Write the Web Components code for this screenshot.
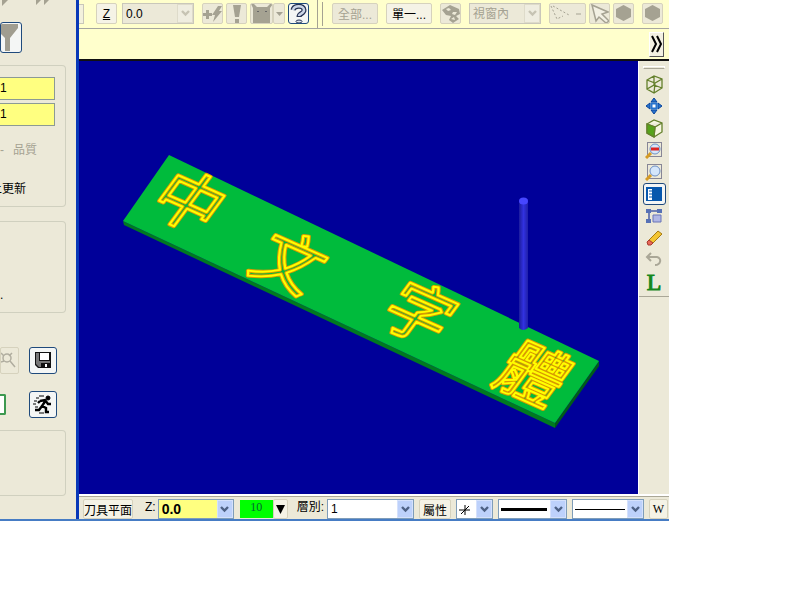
<!DOCTYPE html>
<html lang="zh-Hant">
<head>
<meta charset="utf-8">
<title>刀具平面</title>
<style>
  body { margin: 0; background: #fff; }
</style>
</head>
<body>
<cam-window></cam-window>

<script>
const arrow = '<svg width="9" height="7" viewBox="0 0 9 7"><path d="M1 1l3.5 3.5L8 1" fill="none" stroke="currentColor" stroke-width="2.4"/></svg>';

const base = `
  *, *::before { box-sizing: border-box; }
  button, input { font: inherit; margin: 0; padding: 0; border-radius: 0; }
  svg { display: block; flex: none; }
`;

class ToolButton extends HTMLElement {
  constructor() {
    super();
    this.attachShadow({ mode: 'open' });
  }

  connectedCallback() {
    const disabled = this.hasAttribute('disabled') ? 'disabled' : '';
    const label = this.getAttribute('label');
    this.shadowRoot.innerHTML = `
      <style>
        ${base}
        :host { display: block; flex: none; width: var(--w, 21px); height: var(--h, 21px); }
        button {
          display: flex;
          align-items: center;
          justify-content: center;
          width: 100%;
          height: 100%;
          overflow: hidden;
          white-space: nowrap;
          color: #000;
          background: #f5f3e6;
          border: 1px solid #d6d2bd;
          border-radius: 2px;
        }
        button:disabled { color: #a5a292; background: #ece9d8; }
        :host([flat]) button { background: none; border: 0; }
        :host([strong]) button { background: #f4f6f5; border: 1px solid #1f4a7c; border-radius: 3px; }
        :host([raised]) button { background: #f3f1e2; border-color: #fff #555 #555 #fff; border-radius: 0; }
      </style>
      <button ${disabled} ${label ? `aria-label="${label}"` : ''}><slot></slot></button>
    `;
  }
}
customElements.define('tool-button', ToolButton);

class ComboBox extends HTMLElement {
  constructor() {
    super();
    this.attachShadow({ mode: 'open' });
  }

  connectedCallback() {
    const disabled = this.hasAttribute('disabled') ? 'disabled' : '';
    const value = this.getAttribute('value') || '';
    this.shadowRoot.innerHTML = `
      <style>
        ${base}
        :host {
          position: relative;
          display: flex;
          flex: none;
          box-sizing: border-box;
          width: var(--w, 72px);
          height: var(--h, 21px);
          background: var(--field, #fff);
          border: 1px solid #7f9db9;
        }
        :host([disabled]) { --field: #ece9d8; border-color: #c9c7ba; color: #a5a292; }
        select {
          appearance: none;
          width: 100%;
          min-width: 0;
          margin: 0;
          padding: 0 16px 0 3px;
          border: 0;
          background: none;
          color: inherit;
          font: inherit;
          opacity: 1;
        }
        .arrow {
          position: absolute;
          top: 0;
          right: 0;
          bottom: 0;
          width: 16px;
          display: flex;
          align-items: center;
          justify-content: center;
          color: #4d6185;
          background: #bdd1fb;
          border: 1px solid #d5e1fc;
          pointer-events: none;
        }
        :host([disabled]) .arrow { color: #c6c3b3; background: #efede0; border-color: #dedbca; }
        .sample {
          position: absolute;
          left: 2px;
          right: 19px;
          top: 0;
          bottom: 0;
          display: flex;
          align-items: center;
          pointer-events: none;
        }
      </style>
      <select ${disabled} aria-label="${this.getAttribute('label')}"><option>${value}</option></select>
      <span class="sample"><slot></slot></span>
      <span class="arrow">${arrow}</span>
    `;
  }
}
customElements.define('combo-box', ComboBox);

class OptionPanel extends HTMLElement {
  constructor() {
    super();
    this.attachShadow({ mode: 'open' });
    this.shadowRoot.innerHTML = `
      <style>
        ${base}
        :host {
          display: flex;
          flex-direction: column;
          flex: none;
          box-sizing: border-box;
          width: 79px;
          overflow: hidden;
          background: #ece9d8;
          border-right: 3px solid #0838b8;
        }
        .steps { height: 22px; display: flex; gap: 27px; padding-left: 1px; }
        .group {
          flex: none;
          width: 66px;
          border: 1px solid #d0d0bf;
          border-left: 0;
          border-radius: 0 4px 4px 0;
        }
        .values { height: 142px; margin-top: 12px; padding-top: 11px; }
        input {
          display: block;
          width: 55px;
          height: 23px;
          margin-bottom: 3px;
          padding-bottom: 2px;
          border: 1px solid #8c9a94;
          border-left: 0;
          background: #ffff80;
        }
        .quality { display: flex; gap: 9px; height: 19px; margin-top: 15px; line-height: 19px; color: #a5a292; }
        .update { display: flex; height: 19px; margin-top: 20px; line-height: 19px; white-space: nowrap; }
        .update span { margin-left: -10px; }
        .second { height: 92px; margin-top: 14px; padding-top: 66px; line-height: 14px; }
        .row { display: flex; align-items: center; height: 28px; gap: 10px; }
        .row.save { margin-top: 33px; }
        .row.run { margin-top: 16px; gap: 23px; }
        .third { height: 66px; margin-top: 12px; }
        .green { width: 6px; height: 21px; background: #fff; border: 2px solid #3d9950; border-left: 0; border-radius: 0 2px 2px 0; }
      </style>
      <div class="steps">
        <svg width="8" height="6"><path d="M1 0H7L1 6z" fill="#a5a292"/></svg>
        <svg width="16" height="6"><path d="M0 0H5L0 5zM8 0H13L8 5z" fill="#a5a292"/></svg>
      </div>
      <tool-button strong label="篩選" style="--w:22px;--h:31px">
        <svg width="20" height="29"><path d="M0 1H17V5L9 15V28H4V15L0 11z" fill="#a09d90"/></svg>
      </tool-button>
      <div class="group values">
        <input aria-label="值 1" value="1">
        <input aria-label="值 2" value="1">
        <div class="quality"><span>-</span><span>品質</span></div>
        <div class="update"><span>上更新</span></div>
      </div>
      <div class="group second">.</div>
      <div class="row save">
        <tool-button disabled label="檢視" style="--w:19px;--h:27px">
          <svg width="18" height="24" fill="none" stroke="#b0ad9f" stroke-width="1.5"><circle cx="6" cy="10" r="4"/><path d="M9 13l5 6M0 5l3 3M0 14l3-1M11 5l-3 3" /></svg>
        </tool-button>
        <tool-button strong label="儲存" style="--w:28px;--h:27px">
          <svg width="18" height="18"><path d="M1 1H17V17H4L1 14z" fill="#111"/><path d="M2 2H5V10H16V12H13V12H7V16H5L2 13z" fill="#777"/><path d="M6 2H15V9H6zM11 13H13V16H11z" fill="#fff"/></svg>
        </tool-button>
      </div>
      <div class="row run">
        <span class="green"></span>
        <tool-button strong label="執行" style="--w:28px;--h:27px">
          <svg width="20" height="20" fill="none" stroke="#000"><circle cx="15" cy="4" r="2" fill="#000"/><path d="M13 6L9 12L13 14V18H16M9 12L6 16H2M7 7L12 6L15 10H18M7 7L5 9" stroke-width="2.4"/><path d="M6 2h5M3 4h3M1 7h3M0 10h3M2 13h3M6 19h5"/></svg>
        </tool-button>
      </div>
      <div class="group third"></div>
    `;
  }
}
customElements.define('option-panel', OptionPanel);

class TopBar extends HTMLElement {
  constructor() {
    super();
    this.attachShadow({ mode: 'open' });
    this.shadowRoot.innerHTML = `
      <style>
        ${base}
        :host { display: block; background: #ffffcc; overflow: hidden; }
        .tools {
          display: flex;
          align-items: center;
          height: 29px;
          padding-bottom: 1px;
          overflow: hidden;
          border-bottom: 1px solid #a5a5a0;
        }
        .edge { width: 5px; height: 20px; background: #f3f1dd; border: 1px solid #c9c7ba; border-left: 0; margin-right: 12px; flex: none; }
        .grip { width: 2px; height: 28px; border-left: 1px solid #a5a292; margin-right: 3px; flex: none; }
        .grip.short { height: 24px; margin-right: 8px; }
        .message { display: flex; justify-content: flex-end; align-items: center; height: 32px; padding-right: 5px; border-bottom: 2px solid #111; }
        .m3 { margin-right: 3px; }
        .m5 { margin-right: 5px; }
        .m8 { margin-right: 8px; }
      </style>
      <div class="tools">
        <span class="edge"></span>
        <tool-button class="m5"><u>Z</u></tool-button>
        <combo-box class="m8" disabled label="Z" value="0.0" style="color:#000"></combo-box>
        <tool-button class="m3" disabled label="快速點">
          <svg width="21" height="18" fill="#a5a292"><path d="M1 8H4V5H7V8H10V11H7V14H4V11H1zM16 1H20L17 6H20L11 17L13 10H10z"/></svg>
        </tool-button>
        <tool-button class="m3" disabled label="警告">
          <svg width="12" height="20" fill="#a5a292"><path d="M2 1H10L8 13H4zM4 15H8V19H4z"/></svg>
        </tool-button>
        <tool-button disabled label="抓點" style="--w:23px">
          <svg width="22" height="21" fill="#a5a292"><path d="M0 1L2 0L6 4H16L20 0L22 1L19 5V20H2V5z"/><path d="M6 8h2v1H6zM14 8h2v1h-2z" fill="#666"/></svg>
        </tool-button>
        <tool-button class="m3" disabled label="抓點選項" style="--w:12px">
          <svg width="7" height="4"><path d="M0 0H7L3.5 4z" fill="#a5a292"/></svg>
        </tool-button>
        <tool-button class="m8" strong label="說明">
          <svg width="19" height="20" viewBox="0 0 19 20"><path d="M4 6C5 1 15 1 15 6C15 10 10 9 10 13" fill="none" stroke="#263353" stroke-width="5"/><path d="M4 6C5 1 15 1 15 6C15 10 10 9 10 12" fill="none" stroke="#cad4e6" stroke-width="2.5"/><ellipse cx="10" cy="17.500" rx="3" ry="1.500" fill="#dce4ef" stroke="#263353"/></svg>
        </tool-button>
        <span class="grip"></span>
        <span class="grip short"></span>
        <tool-button class="m8" disabled style="--w:46px">全部...</tool-button>
        <tool-button class="m8" style="--w:46px">單一...</tool-button>
        <tool-button class="m8" disabled label="實體">
          <svg width="20" height="20"><path d="M1 6L9 1L18 5L19 10L15 12L18 15L12 19L8 16L10 12L5 11z" fill="#a5a292"/><path d="M5 5l3-1 2 2-3 1zM12 8l4 0-2 3-3-1zM10 15l3-2 1 3z" fill="#ece9d8"/></svg>
        </tool-button>
        <combo-box class="m8" disabled label="視窗選取" value="視窗內"></combo-box>
        <tool-button class="m3" disabled label="選取方式" style="--w:37px">
          <svg width="35" height="19" fill="none" stroke="#a5a292"><path d="M1 2L7 15L13 12M3 2L19 11" stroke-dasharray="2 2"/><path d="M26 10h5"/></svg>
        </tool-button>
        <tool-button class="m3" disabled label="選取">
          <svg width="20" height="20"><path d="M2 1L18 8L12 10L19 17L16 19L9 13L6 17z" fill="#f2f0e3" stroke="#a5a292" stroke-width="1.5"/></svg>
        </tool-button>
        <tool-button class="m8" disabled label="驗證">
          <svg width="19" height="19"><path d="M9.500 1L17 5V13L9.500 17L2 13V5z" fill="#a5a292"/></svg>
        </tool-button>
        <tool-button disabled label="停止">
          <svg width="19" height="19"><path d="M9.500 1L17 5V13L9.500 17L2 13V5z" fill="#a5a292"/></svg>
        </tool-button>
      </div>
      <div class="message">
        <tool-button raised label="更多" style="--w:15px;--h:25px">
          <svg width="12" height="22" fill="none" stroke="#000" stroke-width="2"><path d="M1 3L5 11L1 19M6 3L10 11L6 19"/></svg>
        </tool-button>
      </div>
    `;
  }
}
customElements.define('top-bar', TopBar);

class ModelView extends HTMLElement {
  constructor() {
    super();
    this.attachShadow({ mode: 'open' });
    // the engraved letters lie in the plane of the plate
    const letters = [['中', 190, 201], ['文', 290, 262], ['字', 420, 313], ['體', 534, 374]];
    this.shadowRoot.innerHTML = `
      <style>
        ${base}
        :host { display: block; flex: 1; min-width: 0; background: #000099; overflow: hidden; }
        svg { width: 100%; height: 100%; }
        text { font-family: "Noto Sans CJK TC", sans-serif; font-size: 64px; text-anchor: middle; fill: none; stroke-linejoin: round; }
        .side { stroke: #d99a00; stroke-width: 4px; }
        .face { stroke: #ffff00; stroke-width: 2px; }
      </style>
      <svg viewBox="79 61 559 433" preserveAspectRatio="xMidYMid meet">
        <defs>
          <linearGradient id="rod"><stop offset="0" stop-color="#1c1c9c"/><stop offset=".5" stop-color="#3232e0"/><stop offset="1" stop-color="#2020a8"/></linearGradient>
        </defs>
        <path d="M123 221L555 423V428L124 225z" fill="#007a20"/>
        <path d="M555 423L599 361V366L555 428z" fill="#005c18"/>
        <path d="M169 155L599 361L555 423L123 221z" fill="#00bb3c"/>
        ${letters.map(([char, x, y]) => `
        <g transform="matrix(.9 .4 -.62 .84 ${x} ${y})">
          <text class="side" y="24">${char}</text>
          <text class="face" y="24" aria-hidden="true">${char}</text>
        </g>`).join('')}
        <path d="M519 201H528V328Q523 332 519 328z" fill="url(#rod)"/>
        <ellipse cx="523.500" cy="201" rx="4.500" ry="3.500" fill="#4646ff"/>
      </svg>
    `;
  }
}
customElements.define('model-view', ModelView);

class ViewTools extends HTMLElement {
  constructor() {
    super();
    this.attachShadow({ mode: 'open' });
    const cube = 'M2 5L9 1L17 4V13L9 18L2 14zM2 5L10 8L17 4M10 8L9 18';
    this.shadowRoot.innerHTML = `
      <style>
        ${base}
        :host { display: block; flex: none; box-sizing: border-box; width: 31px; background: #ece9d8; border-left: 1px solid #fff; }
        .bar { display: flex; flex-direction: column; align-items: center; padding: 5px 0 3px; border-bottom: 1px solid #aaa797; }
        .grip { width: 22px; height: 3px; margin-bottom: 4px; border: 1px solid #fff; border-bottom-color: #aaa797; }
        tool-button { --w: 23px; --h: 22px; }
      </style>
      <div class="bar">
        <span class="grip"></span>
        <tool-button flat label="等角視圖"><svg width="18" height="19" fill="none" stroke="#64802c" stroke-width="1.300"><path d="${cube}M9 1V10L2 14M9 10L17 13"/></svg></tool-button>
        <tool-button flat label="平移"><svg width="18" height="18" fill="#2775cf" stroke="#0b459b"><path d="M9 1L12 5H6zM9 17L12 13H6zM1 9L5 6V12zM17 9L13 6V12z"/><path d="M6.500 6.500H11.500V11.500H6.500z" fill="#fff" stroke="#2775cf" stroke-width="2"/></svg></tool-button>
        <tool-button flat label="前視圖"><svg width="18" height="19" stroke="#64802c" stroke-width="1.300"><path d="${cube}" fill="#f6f6df"/><path d="M2 5L10 8L9 18L2 14z" fill="#56a31a"/></svg></tool-button>
        <tool-button flat label="縮小"><svg width="18" height="18"><path d="M2.500 1.500H16.500V15.500H2.500z" fill="none" stroke="#225" stroke-dasharray="1 1"/><path d="M1 17L6 12" stroke="#d59b25" stroke-width="3"/><circle cx="10" cy="8" r="5" fill="#d4e6fb" stroke="#6e8fc4"/><path d="M6 8H14" stroke="#db2525" stroke-width="3"/></svg></tool-button>
        <tool-button flat label="視窗放大"><svg width="18" height="18"><path d="M2.500 1.500H16.500V15.500H2.500z" fill="none" stroke="#225" stroke-dasharray="1 1"/><path d="M1 17L6 12" stroke="#d59b25" stroke-width="3"/><circle cx="10" cy="8" r="5" fill="#d4e6fb" stroke="#6e8fc4"/></svg></tool-button>
        <tool-button strong label="視窗配置"><svg width="16" height="16"><path d="M0 1H16V15H0z" fill="#0758ad"/><path d="M2 3H6V14H2z" fill="#fff"/><path d="M3 5H6M3 8H6M3 11H6" stroke="#0758ad"/></svg></tool-button>
        <tool-button flat label="座標"><svg width="18" height="18"><path d="M4 4H14M4 4V14" stroke="#7180b3" stroke-width="2"/><path d="M1 2H6V6H1zM12 2H17V6H12zM1 12H6V16H1z" fill="#5671b6"/><path d="M8 8H16V15H8z" fill="#b0b7e5" stroke="#6975b7"/></svg></tool-button>
        <tool-button flat label="刪除"><svg width="18" height="18"><path d="M3 12L13 2L17 5L7 15z" fill="#f3c532" stroke="#a67a13"/><path d="M2 13L4 11L8 14L6 16H3z" fill="#e7695b" stroke="#a8382d"/></svg></tool-button>
        <tool-button flat disabled label="復原"><svg width="18" height="18"><path d="M3 6H12C17 7 16 14 10 14M6 2L2 6L6 10" fill="none" stroke="#aaa797" stroke-width="2"/></svg></tool-button>
        <tool-button flat style="font:24px 'Liberation Serif',serif"><span style="color:#16871d;-webkit-text-stroke:1px #16871d">L</span></tool-button>
      </div>
    `;
  }
}
customElements.define('view-tools', ViewTools);

class StatusBar extends HTMLElement {
  constructor() {
    super();
    this.attachShadow({ mode: 'open' });
    this.shadowRoot.innerHTML = `
      <style>
        ${base}
        :host {
          display: flex;
          align-items: center;
          box-sizing: border-box;
          height: 25px;
          padding: 3px 0 0 4px;
          overflow: hidden;
          background: #ece9d8;
          border-top: 2px solid #fff;
          box-shadow: inset 0 1px #aaa797;
        }
        label { flex: none; height: 20px; line-height: 16px; }
        .z { margin: 0 2px 0 12px; }
        .layer { margin: 0 3px 0 9px; }
        combo-box, tool-button { --h: 20px; }
        .color { flex: none; width: 33px; height: 18px; margin-left: 6px; padding-bottom: 3px; border: 0; background: #00ff00; text-align: center; font-family: "Liberation Serif", serif; color: #063; }
        .gap { margin-left: 5px; }
      </style>
      <tool-button style="--w:50px">刀具平面</tool-button>
      <label class="z">Z:</label>
      <combo-box label="Z" value="0.0" style="--w:76px;--field:#ffff80;font-weight:bold;font-size:14px"></combo-box>
      <button class="color">10</button>
      <tool-button label="顏色" style="--w:15px"><svg width="9" height="9"><path d="M0 0H9L4.500 9z"/></svg></tool-button>
      <label class="layer">層別:</label>
      <combo-box label="層別" value="1" style="--w:87px"></combo-box>
      <tool-button class="gap" style="--w:32px">屬性</tool-button>
      <combo-box class="gap" label="點型式" style="--w:37px"><svg width="11" height="11" stroke="#000"><path d="M0 6H11M6 1V11M2 10L10 2"/></svg></combo-box>
      <combo-box class="gap" label="線寬" style="--w:69px"><svg width="46" height="3"><path d="M0 0H46V3H0z"/></svg></combo-box>
      <combo-box class="gap" label="線型" style="--w:72px"><svg width="50" height="1"><path d="M0 0H50V1H0z"/></svg></combo-box>
      <tool-button class="gap" style="--w:19px;font-family:'Liberation Serif',serif">W</tool-button>
    `;
  }
}
customElements.define('status-bar', StatusBar);

class CamWindow extends HTMLElement {
  constructor() {
    super();
    this.attachShadow({ mode: 'open' });
    this.shadowRoot.innerHTML = `
      <style>
        ${base}
        :host {
          display: block;
          box-sizing: border-box;
          height: 100vh;
          padding: 0 131px 79px 0;
          color: #000;
          font: 12px "Liberation Sans", "Noto Sans CJK TC", sans-serif;
        }
        .window { display: flex; height: 100%; border-bottom: 2px solid #467cc4; }
        .main { display: flex; flex-direction: column; flex: 1; min-width: 0; }
        .work { display: flex; flex: 1; min-height: 0; }
      </style>
      <div class="window">
        <option-panel></option-panel>
        <div class="main">
          <top-bar></top-bar>
          <div class="work">
            <model-view></model-view>
            <view-tools></view-tools>
          </div>
          <status-bar></status-bar>
        </div>
      </div>
    `;
  }
}
customElements.define('cam-window', CamWindow);
</script>
</body>
</html>
